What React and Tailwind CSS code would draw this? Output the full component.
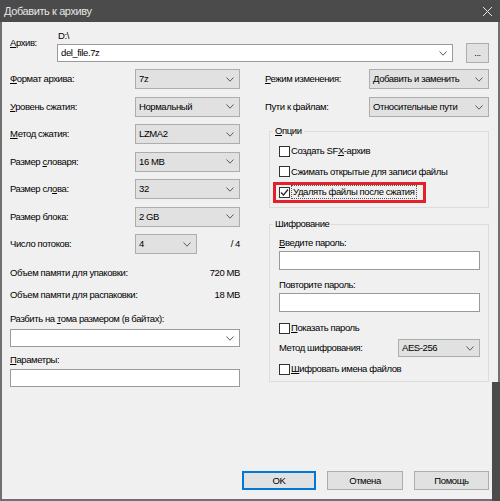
import React from 'react';

function Chevron() {
  return (
    <svg width="8" height="5" viewBox="0 0 8 5">
      <polyline points="0.5,0.5 4,4.2 7.5,0.5" fill="none" stroke="#5a5a5a" strokeWidth="1" />
    </svg>
  );
}

function Combo({ value, className }) {
  return (
    <div className={`flex items-center justify-between border pl-[3px] pr-[5px] ${className}`}>
      <span>{value}</span>
      <Chevron />
    </div>
  );
}

function CheckBox({ checked }) {
  return (
    <span className="flex items-center justify-center w-[11px] h-[11px] border border-[#333] bg-white shrink-0">
      {checked && (
        <svg width="9" height="9" viewBox="0 0 9 9">
          <polyline points="1,4.5 3.5,7 8,1.5" fill="none" stroke="#222" strokeWidth="1.2" />
        </svg>
      )}
    </span>
  );
}

function Row({ label, children }) {
  return (
    <div className="flex items-center h-[20px]">
      <span className="w-[125px]">{label}</span>
      {children}
    </div>
  );
}

function App() {
  const grayCombo = 'bg-[#e1e1e1] border-[#adadad]';

  return (
    <div className="relative w-[500px] h-[501px] overflow-hidden bg-[#4b4b4b] font-['Liberation_Sans',Arial,sans-serif] text-[9.5px] leading-[14px] tracking-[-0.4px] text-black">
      {/* title bar */}
      <div className="h-[22px] flex items-center justify-between pl-[4px] pr-[8px] text-[#e6e6e6] text-[11px]">
        <span>Добавить к архиву</span>
        <svg width="9" height="9" viewBox="0 0 9 9">
          <path d="M0 0 L9 9 M9 0 L0 9" stroke="#e6e6e6" strokeWidth="1" />
        </svg>
      </div>

      <div className="h-[479px] bg-[#f0f0f0] border-l-2 border-r-2 border-b-2 border-[#707070] pt-[7px] pl-[8px] pr-[9px]">
        {/* archive */}
        <div className="flex items-start">
          <span className="w-[47px] pt-[7px]">
            <span className="underline">А</span>рхив:
          </span>
          <div className="flex flex-col">
            <span className="h-[14px] pl-[1px]">D:\</span>
            <div className="flex items-end gap-[13px]">
              <Combo value="del_file.7z" className="w-[396px] h-[18px] bg-white border-[#9a9a9a]" />
              <div className="w-[23px] h-[20px] flex items-center justify-center bg-[#e1e1e1] border border-[#adadad] text-[9px] mb-[-1px]">...</div>
            </div>
          </div>
        </div>

        {/* columns */}
        <div className="flex items-start gap-[25px] mt-[7px]">
          {/* left */}
          <div className="w-[230px] flex flex-col">
            <div className="flex flex-col gap-[7.5px]">
              <Row label={<><span className="underline">Ф</span>ормат архива:</>}>
                <Combo value="7z" className={`w-[105px] h-[20px] ${grayCombo}`} />
              </Row>
              <Row label={<><span className="underline">У</span>ровень сжатия:</>}>
                <Combo value="Нормальный" className={`w-[105px] h-[20px] ${grayCombo}`} />
              </Row>
              <Row label={<><span className="underline">М</span>етод сжатия:</>}>
                <Combo value="LZMA2" className={`w-[105px] h-[20px] ${grayCombo}`} />
              </Row>
              <Row label={<>Размер <span className="underline">с</span>ловаря:</>}>
                <Combo value="16 MB" className={`w-[105px] h-[20px] ${grayCombo}`} />
              </Row>
              <Row label={<>Размер сл<span className="underline">о</span>ва:</>}>
                <Combo value="32" className={`w-[105px] h-[20px] ${grayCombo}`} />
              </Row>
              <Row label="Размер блока:">
                <Combo value="2 GB" className={`w-[105px] h-[20px] ${grayCombo}`} />
              </Row>
              <Row label="Число потоков:">
                <Combo value="4" className={`w-[62px] h-[20px] ${grayCombo}`} />
                <span className="flex-1 text-right">/ 4</span>
              </Row>
            </div>

            <div className="mt-[12px] flex justify-between h-[14px]">
              <span>Объем памяти для упаковки:</span>
              <span>720 MB</span>
            </div>
            <div className="mt-[8px] flex justify-between h-[14px]">
              <span>Объем памяти для распаковки:</span>
              <span>18 MB</span>
            </div>
            <span className="mt-[10px] h-[14px]">
              Разбить на <span className="underline">т</span>ома размером (в байтах):
            </span>
            <Combo value="" className="mt-[3px] w-[230px] h-[18px] bg-white border-[#9a9a9a]" />
            <span className="mt-[6px] h-[14px]">
              <span className="underline">П</span>араметры:
            </span>
            <div className="mt-[2px] w-[230px] h-[18px] bg-white border border-[#9a9a9a]" />
          </div>

          {/* right */}
          <div className="w-[224px] flex flex-col">
            <div className="flex flex-col gap-[8px]">
              <div className="flex items-center h-[20px]">
                <span className="w-[104px]">
                  <span className="underline">Р</span>ежим изменения:
                </span>
                <Combo value="Добавить и заменить" className={`w-[120px] h-[20px] ${grayCombo}`} />
              </div>
              <div className="flex items-center h-[20px]">
                <span className="w-[104px]">Пути к файлам:</span>
                <Combo value="Относительные пути" className={`w-[120px] h-[20px] ${grayCombo}`} />
              </div>
            </div>

            <fieldset className="mt-[7px] ml-[4px] w-[220px] border border-[#dcdcdc]">
              <legend className="ml-[3px] px-[2px] h-[14px]">
                <span className="underline">О</span>пции
              </legend>
              <div className="flex flex-col gap-[6.5px] pt-[6px] pb-[8px] pl-[9px]">
                <div className="flex items-center gap-[1px] h-[14px]">
                  <CheckBox />
                  <span>Создать SF<span className="underline">X</span>-архив</span>
                </div>
                <div className="flex items-center gap-[1px] h-[14px]">
                  <CheckBox />
                  <span>Сжимать открытые для записи файлы</span>
                </div>
                <div className="relative flex items-center gap-[1px] h-[14px]">
                  <CheckBox checked />
                  <span className="border border-dotted border-[#555] px-[1px] leading-[12px]">Удалять файлы после сжатия</span>
                  <span className="absolute left-[-6px] top-[-3px] w-[153px] h-[21px] border-[3px] border-[#e4202a]" />
                </div>
              </div>
            </fieldset>

            <fieldset className="mt-[9px] ml-[4px] w-[220px] border border-[#dcdcdc]">
              <legend className="ml-[3px] px-[2px] h-[14px]">Шифрование</legend>
              <div className="flex flex-col pl-[9px] pr-[8px] pb-[5px]">
                <span className="mt-[5px] h-[14px]">
                  <span className="underline">В</span>ведите пароль:
                </span>
                <div className="mt-[1px] h-[19px] bg-white border border-[#9a9a9a]" />
                <span className="mt-[8px] h-[14px]">Повторите пароль:</span>
                <div className="mt-[1px] h-[19px] bg-white border border-[#9a9a9a]" />
                <div className="mt-[9px] flex items-center gap-[1px] h-[14px]">
                  <CheckBox />
                  <span>
                    <span className="underline">П</span>оказать пароль
                  </span>
                </div>
                <div className="mt-[4px] flex items-center justify-between h-[18px]">
                  <span>Метод шифрования:</span>
                  <Combo value="AES-256" className={`w-[82px] h-[18px] ${grayCombo}`} />
                </div>
                <div className="mt-[5px] flex items-center gap-[1px] h-[14px]">
                  <CheckBox />
                  <span>
                    <span className="underline">Ш</span>ифровать имена файлов
                  </span>
                </div>
              </div>
            </fieldset>
          </div>
        </div>

        {/* buttons */}
        <div className="mt-[84px] flex justify-end gap-[11px]">
          <div className="w-[74px] h-[19px] flex items-center justify-center bg-[#e1e1e1] border-2 border-[#0078d7]">OK</div>
          <div className="w-[76px] h-[19px] flex items-center justify-center bg-[#e1e1e1] border border-[#adadad]">Отмена</div>
          <div className="w-[75px] h-[19px] flex items-center justify-center bg-[#e1e1e1] border border-[#adadad]">Помощь</div>
        </div>
      </div>

      <div className="absolute right-0 bottom-0 w-[8px] h-[119px] bg-[#4b4b4b]" />
    </div>
  );
}

export default App;
